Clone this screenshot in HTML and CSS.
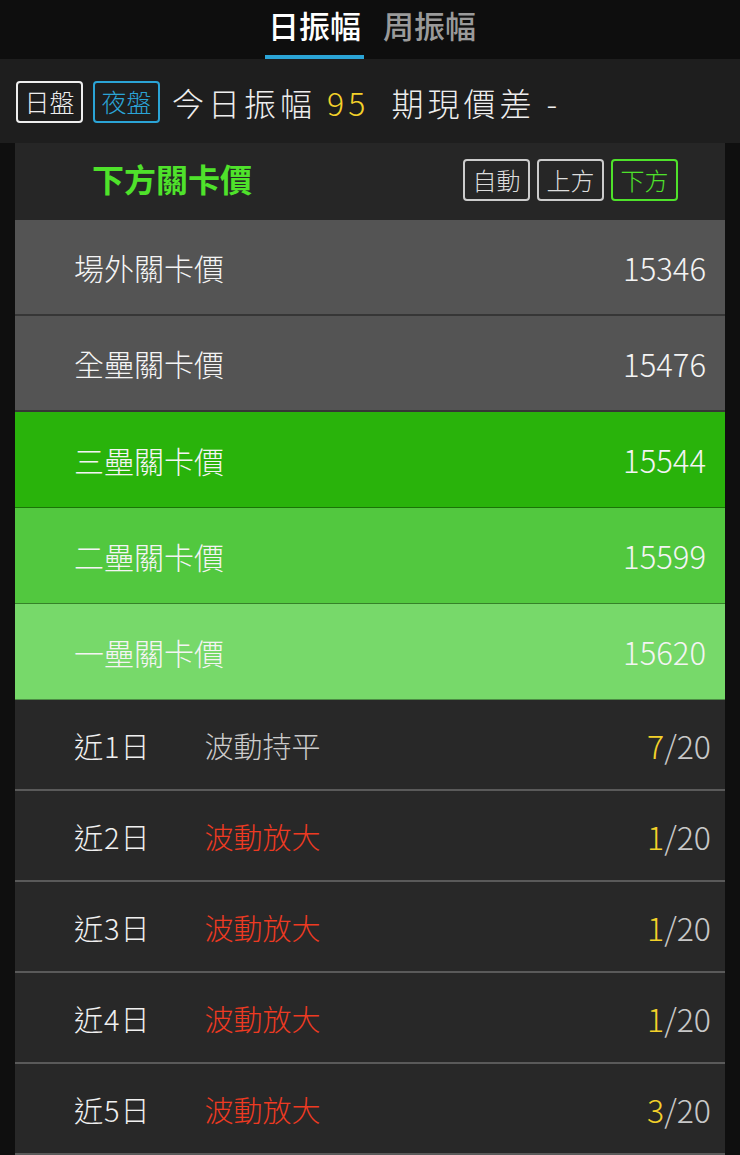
FILE: index.html
```html
<!DOCTYPE html>
<html lang="zh-Hant">
<head>
    <meta charset="UTF-8">
    <title>振幅</title>
    <link rel="stylesheet" href="styles.css">
</head>
<body>
    <div class="tab-bar">
        <div class="tab active">日振幅</div>
        <div class="tab">周振幅</div>
    </div>

    <div class="info-bar">
        <span class="session-btn">日盤</span>
        <span class="session-btn blue">夜盤</span>
        <span class="info-text">今日振幅 <span class="yellow">95</span>&nbsp; 期現價差 -</span>
    </div>

    <div class="panel">
        <div class="panel-head">
            <div class="panel-title">下方關卡價</div>
            <div class="mode-group">
                <span class="mode-btn">自動</span>
                <span class="mode-btn">上方</span>
                <span class="mode-btn on">下方</span>
            </div>
        </div>

        <div class="price-row gray">
            <span>場外關卡價</span><span class="num">15346</span>
        </div>
        <div class="price-row gray">
            <span>全壘關卡價</span><span class="num">15476</span>
        </div>
        <div class="price-row green3">
            <span>三壘關卡價</span><span class="num">15544</span>
        </div>
        <div class="price-row green2">
            <span>二壘關卡價</span><span class="num">15599</span>
        </div>
        <div class="price-row green1">
            <span>一壘關卡價</span><span class="num">15620</span>
        </div>

        <div class="day-row">
            <span class="day">近1日</span>
            <span class="state">波動持平</span>
            <span class="count"><span class="yellow">7</span>/20</span>
        </div>
        <div class="day-row">
            <span class="day">近2日</span>
            <span class="state red">波動放大</span>
            <span class="count"><span class="yellow">1</span>/20</span>
        </div>
        <div class="day-row">
            <span class="day">近3日</span>
            <span class="state red">波動放大</span>
            <span class="count"><span class="yellow">1</span>/20</span>
        </div>
        <div class="day-row">
            <span class="day">近4日</span>
            <span class="state red">波動放大</span>
            <span class="count"><span class="yellow">1</span>/20</span>
        </div>
        <div class="day-row">
            <span class="day">近5日</span>
            <span class="state red">波動放大</span>
            <span class="count"><span class="yellow">3</span>/20</span>
        </div>
    </div>
</body>
</html>
```

FILE: styles.css
```css
body {
    margin: 0;
    background-color: #0f0f0f;
    color: #eeeeee;
    font-family: "Noto Sans CJK TC", "Liberation Sans", sans-serif;
    font-weight: 300;
}
.yellow {
    color: #f3d12a;
}
.red {
    color: #ee3a22;
}

/* 頂部分頁 */
.tab-bar {
    height: 59px;
    background-color: #0e0e0e;
    display: flex;
    justify-content: center;
    gap: 16px;
    padding-left: 4px;
}
.tab {
    font-size: 31px;
    font-weight: 500;
    line-height: 50px;
    color: #9a9a9a;
    padding: 0 3px;
    border-bottom: 4px solid transparent;
    height: 55px;
}
.tab.active {
    color: #ffffff;
    border-bottom-color: #2ba4d6;
}

/* 日盤 夜盤 */
.info-bar {
    height: 84px;
    background-color: #1e1e1e;
    display: flex;
    align-items: center;
    padding-left: 16px;
    padding-top: 1px;
    box-sizing: border-box;
}
.session-btn {
    width: 67px;
    height: 42px;
    box-sizing: border-box;
    border: 2px solid #eeeeee;
    border-radius: 4px;
    font-size: 25px;
    line-height: 37px;
    text-align: center;
    margin-right: 10px;
}
.session-btn.blue {
    border-color: #2ba4d6;
    color: #2ba4d6;
    margin-right: 12px;
}
.info-text {
    font-size: 32px;
    letter-spacing: 4px;
}

/* 主面板 */
.panel {
    margin: 0 15px;
    background-color: #282828;
}
.panel-head {
    height: 77px;
    box-sizing: border-box;
    background-color: #262626;
    display: flex;
    align-items: center;
    justify-content: space-between;
    padding: 0 47px 8px 77px;
}
.panel-title {
    color: #4fe22b;
    font-size: 32px;
    font-weight: bold;
}
.mode-group {
    display: flex;
    gap: 7px;
    padding-top: 4px;
}
.mode-btn {
    width: 67px;
    height: 42px;
    box-sizing: border-box;
    border: 2px solid #cccccc;
    border-radius: 4px;
    font-size: 24px;
    line-height: 37px;
    text-align: center;
    color: #dddddd;
}
.mode-btn.on {
    border-color: #4fe22b;
    color: #4fe22b;
}

/* 關卡價 */
.price-row {
    height: 96px;
    box-sizing: border-box;
    display: flex;
    align-items: center;
    justify-content: space-between;
    padding: 0 19px 0 59px;
    font-size: 30px;
    color: #f4f4f4;
    border-bottom: 1px solid rgba(0, 0, 0, 0.35);
}
.price-row.gray {
    background-color: #545454;
    border-bottom-width: 2px;
}
.green3 {
    background-color: #29b30b;
}
.green2 {
    background-color: #52c83f;
}
.green1 {
    background-color: #77d96a;
}
.num {
    font-size: 31px;
}

/* 近N日 */
.day-row {
    height: 91px;
    box-sizing: border-box;
    display: flex;
    align-items: center;
    padding: 0 14px 0 59px;
    font-size: 29px;
    border-bottom: 2px solid #5a5a5a;
}
.day {
    color: #f0f0f0;
    margin-right: 54px;
    letter-spacing: 1px;
}
.state {
    color: #cccccc;
}
.state.red {
    color: #ee3a22;
}
.count {
    margin-left: auto;
    color: #c8c8c8;
    font-size: 32px;
}
```
